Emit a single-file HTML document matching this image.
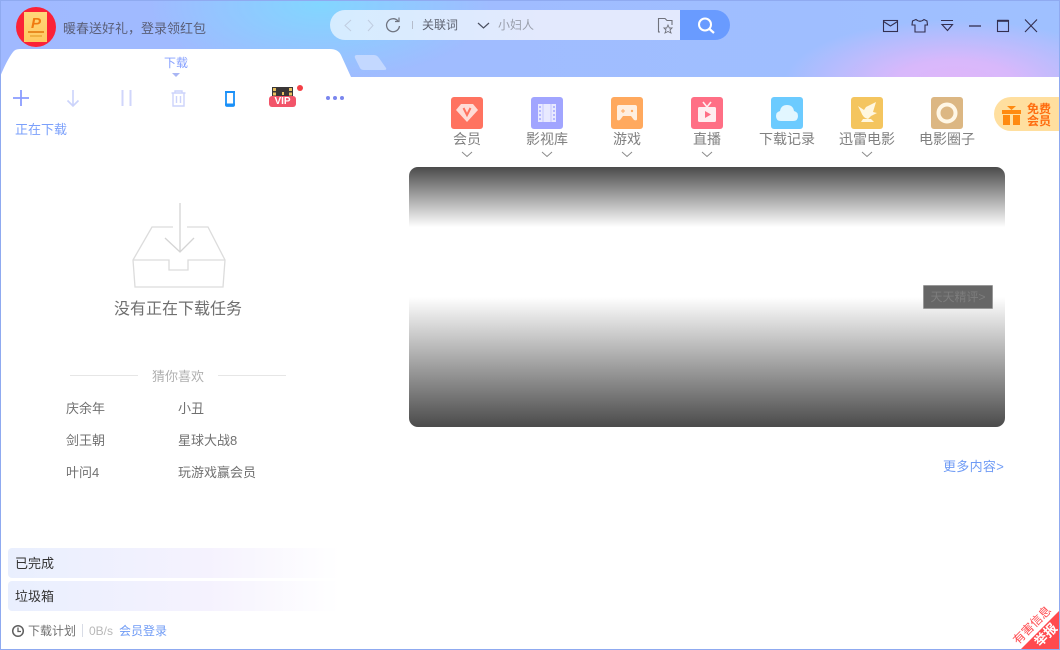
<!DOCTYPE html>
<html lang="zh-CN"><head><meta charset="utf-8"><title>下载</title>
<style>
html,body{margin:0;padding:0;width:1060px;height:650px;overflow:hidden;background:#fff}
body{font-family:"Liberation Sans","Noto Sans CJK SC",sans-serif;font-size:13px;color:#666;position:relative}
.a{position:absolute;white-space:nowrap;line-height:18px}
svg{position:absolute;overflow:visible}
#hd{position:absolute;left:0;top:0;width:1060px;height:77px;background:
 radial-gradient(ellipse 170px 62px at 955px 82px,#dfb6fa 0%,#d8b8fb 35%,rgba(216,184,251,0) 100%),
 radial-gradient(ellipse 170px 75px at 320px 5px,#82d6ff 0%,rgba(130,214,255,0) 100%),
 linear-gradient(90deg,#a0b9ff 0%,#9fc0ff 100%)}
#frame{position:absolute;left:0;top:0;width:1058px;height:648px;border:1px solid #8faaf0;pointer-events:none}
.ic{position:absolute;top:97px;width:32px;height:32px;border-radius:3px}
.lb{position:absolute;top:130px;width:80px;text-align:center;color:#808080;font-size:14px;line-height:18px}
.rec{font-size:13px;color:#707070}
</style></head><body>
<div id="hd"></div>

<div class="a" style="left:16px;top:7px;width:40px;height:40px;border-radius:50%;background:#fb2237"></div>
<div class="a" style="left:24px;top:12px;width:23px;height:30px;background:linear-gradient(#ffd77a,#ffc860)"></div>
<div class="a" style="left:31px;top:16px;font:italic bold 15px/15px 'Liberation Sans',sans-serif;color:#f07a10">P</div>
<div class="a" style="left:28px;top:31px;width:16px;height:2px;background:#e88a20"></div>
<div class="a" style="left:30px;top:35px;width:12px;height:2px;background:#f0b040"></div>
<div class="a" style="left:63px;top:20px;color:#5a5f78;font-size:13px">暖春送好礼，登录领红包</div>

<svg style="left:0;top:49px" width="360" height="28"><path d="M0 28C4 18 9 8 13 3Q15 0 20 0H330Q338 0 341 6L351 28Z" fill="#fff"/></svg>
<div class="a" style="left:164px;top:54px;color:#86a0ff;font-size:12px;line-height:18px">下载</div>
<svg style="left:172px;top:73px" width="9" height="5"><path d="M0 0H8L4 4Z" fill="#a9b6f4"/></svg>
<svg style="left:354px;top:55px" width="34" height="16"><path d="M3 0H20Q23 0 25 3L32 13Q33 15 30 15H10Q7 15 6 13L1 3Q0 0 3 0Z" fill="#c3d8ff"/></svg>

<div class="a" style="left:330px;top:10px;width:350px;height:30px;border-radius:15px 0 0 15px;background:linear-gradient(90deg,#d5ecff,#e3e9fd 60%)"></div>
<div class="a" style="left:680px;top:10px;width:50px;height:30px;border-radius:0 15px 15px 0;background:#699bff"></div>
<svg style="left:340px;top:15px" width="400" height="22" fill="none">
<path d="M11 5L5 10.500L11 16" stroke="#c0cde0"/><path d="M28 5L33 10.500L28 16" stroke="#c0cde0"/>
<path d="M58 6A6.500 6.500 0 1 0 59.500 11" stroke="#6f7480" stroke-width="1.300"/><path d="M55 6.500H59V2.500" stroke="#6f7480" stroke-width="1.200"/>
<path d="M72.500 6V14" stroke="#b5bccb"/><path d="M138 8L143.500 13L149 8" stroke="#4a4f60" stroke-width="1.200"/>
<path d="M320 17H318.500V3.500H325L327 5.500H332V10" stroke="#70727c" stroke-width="1.100"/>
<path d="M328 10L329.300 13H332L330 15L331 18L328 16.500L325 18L326 15L324 13H326.700Z" stroke="#70727c" stroke-width=".9"/>
<circle cx="365" cy="9.500" r="6" stroke="#fff" stroke-width="2"/><path d="M369.500 14L374 18" stroke="#fff" stroke-width="2.200"/>
</svg>
<div class="a" style="left:422px;top:16px;color:#5d6270;font-size:12px">关联词</div>
<div class="a" style="left:498px;top:16px;color:#9a9fab;font-size:12px">小妇人</div>

<svg style="left:880px;top:15px" width="160" height="24" fill="none" stroke="#332f50" stroke-width="1.100">
<rect x="3.500" y="5.500" width="14" height="11"/><path d="M3.500 6.500L10.500 11L17.500 6.500"/>
<path d="M36 4.500L32.500 6L32 10H35V17H45V10H47.500L47 6L44 4.500Q40 8 36 4.500Z"/>
<path d="M61 5.500H73M62 9.500H72.500L67.500 15.500Z"/>
<path d="M89 11H101" stroke-width="1.300"/>
<rect x="117.500" y="5.500" width="11" height="11"/><path d="M117.500 5.800H128.500" stroke-width="2"/>
<path d="M145 4.500L157 17M157 4.500L145 17"/>
</svg>

<svg style="left:12px;top:90px" width="340" height="20" fill="none">
<path d="M9 0V16M1 8H17" stroke="#8a9cff" stroke-width="1.800"/>
<path d="M61 0V16M55.500 10.500L61 16L66.500 10.500" stroke="#cbd3fb" stroke-width="1.600"/>
<path d="M110.500 0V16M118.500 0V16" stroke="#d0d6fb" stroke-width="2"/>
<path d="M159.500 3H173.500M163 3V1H170V3M161 3V16H172V3M164.500 6V13M168.500 6V13" stroke="#ccd3fb" stroke-width="1.400"/>
<rect x="214" y="2" width="8" height="14" rx="1" stroke="#1a90f8" stroke-width="1.800"/><path d="M213 14.500H223M213 2H223" stroke="#1a90f8" stroke-width="2"/>
<circle cx="316" cy="8" r="2" fill="#7a86ee"/><circle cx="323" cy="8" r="2" fill="#7a86ee"/><circle cx="330" cy="8" r="2" fill="#7a86ee"/>
</svg>
<div class="a" style="left:272px;top:87px;width:21px;height:9px;background:#3a3636"></div>
<svg style="left:272px;top:87px" width="21" height="9"><path d="M1 1H4V4H1ZM17 1H20V4H17ZM1 5.500H4V8.500H1ZM17 5.500H20V8.500H17ZM10 5H12V8H10Z" fill="#e8c060"/></svg>
<div class="a" style="left:269px;top:96px;width:27px;height:11px;border-radius:3px;background:#f25469;color:#fff;font:bold 10px/11px 'Liberation Sans',sans-serif;text-align:center">VIP</div>
<div class="a" style="left:297px;top:85px;width:6px;height:6px;border-radius:50%;background:#f43f45"></div>
<div class="a" style="left:15px;top:121px;color:#7ba0fb;font-size:13px">正在下载</div>

<svg style="left:130px;top:203px" width="100" height="90" fill="none" stroke="#dcdcdc" stroke-width="1.300">
<path d="M43 24H22L3 57L5 84H93L95 57L78 24H57"/><path d="M3 57H39V67H58V57H95"/>
<path d="M50 0V49M35 35L50 49L64 35" stroke="#d4d4d4"/>
</svg>
<div class="a" style="left:114px;top:300px;font-size:16px;line-height:20px;color:#6f6f6f">没有正在下载任务</div>

<div class="a" style="left:70px;top:375px;width:68px;height:1px;background:#e6e6e6"></div>
<div class="a" style="left:218px;top:375px;width:68px;height:1px;background:#e6e6e6"></div>
<div class="a" style="left:152px;top:368px;color:#b0b0b0">猜你喜欢</div>
<div class="a rec" style="left:66px;top:400px">庆余年</div>
<div class="a rec" style="left:178px;top:400px">小丑</div>
<div class="a rec" style="left:66px;top:432px">剑王朝</div>
<div class="a rec" style="left:178px;top:432px">星球大战8</div>
<div class="a rec" style="left:66px;top:464px">叶问4</div>
<div class="a rec" style="left:178px;top:464px">玩游戏赢会员</div>

<div class="a" style="left:8px;top:548px;width:332px;height:30px;border-radius:4px;background:linear-gradient(90deg,#e9effe,#f5f2fe 60%,#fff)"></div>
<div class="a" style="left:8px;top:581px;width:332px;height:30px;border-radius:4px;background:linear-gradient(90deg,#e9effe,#f5f2fe 60%,#fff)"></div>
<div class="a" style="left:15px;top:555px;color:#333">已完成</div>
<div class="a" style="left:15px;top:588px;color:#333">垃圾箱</div>
<svg style="left:11px;top:624px" width="14" height="14" fill="none" stroke="#5f5f5f"><circle cx="7" cy="7" r="5.300" stroke-width="1.500"/><path d="M7 3.500V7.500H10" stroke-width="1.300"/></svg>
<div class="a" style="left:28px;top:622px;color:#707070;font-size:12px">下载计划</div>
<div class="a" style="left:82px;top:624px;width:1px;height:13px;background:#d8dce6"></div>
<div class="a" style="left:89px;top:622px;color:#b8b8b8;font-size:12px">0B/s</div>
<div class="a" style="left:119px;top:622px;color:#6f9bf5;font-size:12px">会员登录</div>

<div class="ic" style="left:451px;background:#ff7360"></div>
<svg style="left:451px;top:97px" width="32" height="32"><path d="M10 7H22L27 13L16 25L5 13Z" fill="#ffdcd6"/><path d="M12.500 11L16 18L19.500 11" fill="none" stroke="#ff7360" stroke-width="2"/></svg>
<div class="ic" style="left:531px;background:#a1a5ff"></div>
<svg style="left:531px;top:97px" width="32" height="32"><rect x="7" y="7" width="18" height="18" fill="#e8e9ff"/><path d="M12 7V25M20 7V25" stroke="#c5c8ff"/><path d="M9 9V23M23 9V23" stroke="#b4b8ff" stroke-width="2" stroke-dasharray="2 2"/></svg>
<div class="ic" style="left:611px;background:#ffa95e"></div>
<svg style="left:611px;top:97px" width="32" height="32"><path d="M8 8H24Q26 8 26 10V22Q26 24 23 23L20 19H12L9 23Q6 24 6 22V10Q6 8 8 8Z" fill="#ffefe0"/><path d="M10 14H14M12 12V16" stroke="#ffa95e"/><circle cx="21" cy="14" r="1.200" fill="#ffa95e"/></svg>
<div class="ic" style="left:691px;background:#ff6f85"></div>
<svg style="left:691px;top:97px" width="32" height="32"><path d="M12 5L16 10L20 5" fill="none" stroke="#ffeef0" stroke-width="1.600"/><rect x="7" y="10" width="18" height="15" rx="1.500" fill="#ffeef0"/><path d="M14 14L20 17.500L14 21Z" fill="#ff6f85"/></svg>
<div class="ic" style="left:771px;background:#6ccbff"></div>
<svg style="left:771px;top:97px" width="32" height="32"><path d="M10 24Q5 24 5 19Q5 15 9 14Q10 8 16 8Q22 8 23 14Q27 15 27 19Q27 24 22 24Z" fill="#e2f6ff"/></svg>
<div class="ic" style="left:851px;background:#f4c55f"></div>
<svg style="left:851px;top:97px" width="32" height="32"><path d="M7 9L13 13L15 10L25 5L22 15L26 16L20 19L17 22Q12 21 10 15Z" fill="#fff7e0"/><path d="M10 25L12 22H20L23 25Z" fill="#fff7e0"/></svg>
<div class="ic" style="left:931px;background:#dcb783"></div>
<svg style="left:931px;top:97px" width="32" height="32"><circle cx="16" cy="16" r="8.500" fill="none" stroke="#fff7e6" stroke-width="4"/></svg>

<div class="lb" style="left:427px">会员</div>
<div class="lb" style="left:507px">影视库</div>
<div class="lb" style="left:587px">游戏</div>
<div class="lb" style="left:667px">直播</div>
<div class="lb" style="left:747px">下载记录</div>
<div class="lb" style="left:827px">迅雷电影</div>
<div class="lb" style="left:907px">电影圈子</div>
<svg style="left:440px;top:150px" width="440" height="9" fill="none" stroke="#8a8a8a"><path d="M22 2L27 6.500L32 2M102 2L107 6.500L112 2M182 2L187 6.500L192 2M262 2L267 6.500L272 2M422 2L427 6.500L432 2"/></svg>

<div class="a" style="left:994px;top:97px;width:66px;height:34px;border-radius:17px 0 0 17px;background:#ffdf9f"></div>
<svg style="left:1002px;top:105px" width="19" height="20"><path d="M0 5H19V9H0ZM1 10H8V20H1ZM11 10H18V20H11ZM5 1L9.500 5L14 1" fill="#ff8a10"/></svg>
<div class="a" style="left:1026px;top:103px;width:26px;color:#ff6d10;font-size:12px;font-weight:bold;line-height:12px;white-space:normal;text-align:center">免费会员</div>

<div class="a" style="left:409px;top:167px;width:596px;height:260px;border-radius:9px;background:linear-gradient(180deg,#4b4b4b 0,#fff 60px,#fff 130px,#4b4b4b 260px)"></div>
<div class="a" style="left:923px;top:285px;width:68px;height:22px;border:1px solid #999;border-radius:1px;background:#666;color:#7d7d7d;font-size:12px;line-height:22px;text-align:center">天天精评&gt;</div>
<div class="a" style="left:943px;top:458px;color:#6f9bf5;font-size:13px;letter-spacing:.3px">更多内容&gt;</div>

<svg style="left:0;top:0;" width="1060" height="650"><path d="M1060 610V650H1020Z" fill="#ff4a4e"/>
<text x="1018" y="645" transform="rotate(-45 1018 645)" font-size="12" fill="#ff4a4e" font-family="'Noto Sans CJK SC',sans-serif">有害信息</text>
<text x="1049" y="638" text-anchor="middle" transform="rotate(-45 1049 638)" font-size="13" font-weight="bold" fill="#fff" font-family="'Noto Sans CJK SC',sans-serif">举报</text></svg>
<div id="frame"></div>
</body></html>
